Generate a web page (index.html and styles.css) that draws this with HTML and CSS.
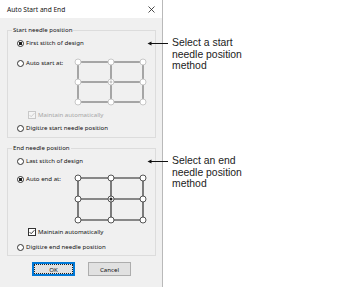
FILE: index.html
```html
<!DOCTYPE html>
<html>
<head>
<meta charset="utf-8">
<link rel="stylesheet" href="styles.css">
</head>
<body>
<div class="page">
  <div class="dialog">
    <div class="titlebar">
      <span class="title">Auto Start and End</span>
      <svg class="close" width="7" height="7" viewBox="0 0 7 7"><path d="M0.5 0.5 L6.5 6.5 M6.5 0.5 L0.5 6.5" stroke="#222" stroke-width="0.8" fill="none"/></svg>
    </div>
    <div class="content">
      <fieldset class="group group-start">
        <legend>Start needle position</legend>
        <div class="opt opt-first"><span class="radio on"></span>First stitch of design</div>
        <div class="auto-row">
          <div class="opt"><span class="radio"></span>Auto start at:</div>
          <svg class="grid" width="73" height="48" viewBox="0 0 73 48">
            <g stroke="#5a5a5a" stroke-width="1" fill="none">
              <path d="M4 4 H69 M4 24 H69 M4 44 H69 M4 4 V44 M37 4 V44 M69 4 V44"/>
            </g>
            <g fill="#fff" stroke="#c2c2c2" stroke-width="0.9">
              <circle cx="4" cy="4" r="3"/><circle cx="37" cy="4" r="3"/><circle cx="69" cy="4" r="3"/>
              <circle cx="4" cy="24" r="3"/><circle cx="37" cy="24" r="3"/><circle cx="69" cy="24" r="3"/>
              <circle cx="4" cy="44" r="3"/><circle cx="37" cy="44" r="3"/><circle cx="69" cy="44" r="3"/>
            </g>
            <circle cx="37" cy="24" r="1.4" fill="#c8c8c8"/>
          </svg>
        </div>
        <div class="check disabled">
          <svg class="box" width="8" height="8" viewBox="0 0 8 8"><rect x="0.5" y="0.5" width="7" height="7" fill="#f4f4f4" stroke="#c8c8c8"/><path d="M1.6 4.1 L3.2 5.7 L6.4 2.2" stroke="#c8c8c8" stroke-width="0.9" fill="none"/></svg>
          Maintain automatically
        </div>
        <div class="opt opt-digitize"><span class="radio"></span>Digitize start needle position</div>
      </fieldset>

      <fieldset class="group group-end">
        <legend>End needle position</legend>
        <div class="opt opt-first"><span class="radio"></span>Last stitch of design</div>
        <div class="auto-row auto-row-end">
          <div class="opt"><span class="radio on"></span>Auto end at:</div>
          <svg class="grid" width="73" height="50" viewBox="0 0 73 50">
            <g stroke="#1e1e1e" stroke-width="1.1" fill="none">
              <path d="M4 4 H69 M4 25 H69 M4 46 H69 M4 4 V46 M37 4 V46 M69 4 V46"/>
            </g>
            <g fill="#fff" stroke="#444" stroke-width="0.9">
              <circle cx="4" cy="4" r="3"/><circle cx="37" cy="4" r="3"/><circle cx="69" cy="4" r="3"/>
              <circle cx="4" cy="25" r="3"/><circle cx="37" cy="25" r="3"/><circle cx="69" cy="25" r="3"/>
              <circle cx="4" cy="46" r="3"/><circle cx="37" cy="46" r="3"/><circle cx="69" cy="46" r="3"/>
            </g>
            <circle cx="37" cy="25" r="1.5" fill="#222"/>
          </svg>
        </div>
        <div class="check">
          <svg class="box" width="8" height="8" viewBox="0 0 8 8"><rect x="0.5" y="0.5" width="7" height="7" fill="#fff" stroke="#333"/><path d="M1.6 4.1 L3.2 5.7 L6.4 2.2" stroke="#222" stroke-width="0.9" fill="none"/></svg>
          Maintain automatically
        </div>
        <div class="opt opt-digitize-end"><span class="radio"></span>Digitize end needle position</div>
      </fieldset>

      <div class="buttons">
        <button class="btn btn-default">OK</button>
        <button class="btn">Cancel</button>
      </div>
    </div>
  </div>

  <div class="callout callout-start">
    <svg class="arrow" width="21" height="12" viewBox="0 0 21 12"><path d="M3 6.5 H21" stroke="#111" stroke-width="1"/><path d="M0.5 6.5 L4.5 4.6 L4.5 8.4 Z" fill="#111"/></svg>
    <div class="callout-text">Select a start<br>needle position<br>method</div>
  </div>
  <div class="callout callout-end">
    <svg class="arrow" width="21" height="12" viewBox="0 0 21 12"><path d="M3 6.5 H21" stroke="#111" stroke-width="1"/><path d="M0.5 6.5 L4.5 4.6 L4.5 8.4 Z" fill="#111"/></svg>
    <div class="callout-text">Select an end<br>needle position<br>method</div>
  </div>
</div>
</body>
</html>
```

FILE: styles.css
```css
html, body {
  margin: 0;
  padding: 0;
  background: #fff;
}

.page {
  position: relative;
  width: 345px;
  height: 292px;
  overflow: hidden;
  font-family: "Noto Sans", "Liberation Sans", sans-serif;
  color: #111;
}

.dialog {
  width: 162px;
  border-right: 1px solid #b9b9b9;
  display: flex;
  flex-direction: column;
}

.titlebar {
  height: 18px;
  background: #fff;
  display: flex;
  align-items: center;
  justify-content: space-between;
  padding: 1px 7px 0 7px;
  box-sizing: border-box;
}

.title {
  font-size: 6.6px;
  color: #111;
}

.close {
  display: block;
  margin-right: 0;
}

.content {
  background: #f0f0f0;
  height: 269px;
  box-sizing: border-box;
  padding: 8px 0 0 7px;
  display: flex;
  flex-direction: column;
}

.group {
  width: 149px;
  box-sizing: border-box;
  margin: 0;
  border: 1px solid #dcdcdc;
  padding: 4px 4px 4px 9px;
  font-size: 6.1px;
  min-width: 0;
}

.group legend {
  font-size: 6.1px;
  line-height: 8px;
  padding: 0 1px;
  margin-left: -5px;
  color: #111;
}

.group-end {
  margin-top: 6px;
  padding-bottom: 3px;
}

.opt {
  display: flex;
  align-items: center;
  height: 10px;
  line-height: 10px;
  white-space: nowrap;
}

.radio {
  width: 7px;
  height: 7px;
  box-sizing: border-box;
  border: 1px solid #333;
  border-radius: 50%;
  background: #fff;
  margin-right: 2px;
  flex: none;
}

.radio.on {
  background: radial-gradient(circle, #1a1a1a 0, #1a1a1a 1.4px, #fff 1.9px);
}

.auto-row {
  display: flex;
  align-items: flex-start;
  margin-top: 10px;
}

.auto-row-end {
  margin-top: 8px;
}

.auto-row .opt {
  width: 57px;
}

.grid {
  display: block;
}

.check {
  display: flex;
  align-items: center;
  height: 10px;
  line-height: 10px;
  margin-top: 4px;
  padding-left: 11px;
  white-space: nowrap;
}

.group-end .check {
  margin-top: 3px;
}

.check .box {
  display: block;
  margin-right: 2px;
  flex: none;
}

.check.disabled {
  color: #a6a6a6;
}

.opt-digitize {
  margin-top: 3px;
}

.opt-digitize-end {
  margin-top: 5px;
}

.buttons {
  display: flex;
  justify-content: center;
  gap: 13px;
  margin-top: 6px;
  width: 149px;
}

.btn {
  width: 43px;
  height: 14px;
  box-sizing: border-box;
  padding: 0;
  margin: 0;
  font-family: inherit;
  font-size: 6.1px;
  color: #111;
  background: #e1e1e1;
  border: 1px solid #adadad;
  border-radius: 0;
}

.btn-default {
  border-color: #0078d7;
  box-shadow: inset 0 0 0 1px #0078d7;
  outline: 1px dotted #222;
  outline-offset: -3px;
}

.callout {
  position: absolute;
  display: flex;
  align-items: flex-start;
}

.callout-start {
  left: 147px;
  top: 37px;
}

.callout-end {
  left: 147px;
  top: 155px;
}

.arrow {
  display: block;
  flex: none;
}

.callout-text {
  margin-left: 4px;
  font-family: "Liberation Sans", Arial, sans-serif;
  font-size: 10.4px;
  line-height: 11.5px;
  color: #222;
}
```
